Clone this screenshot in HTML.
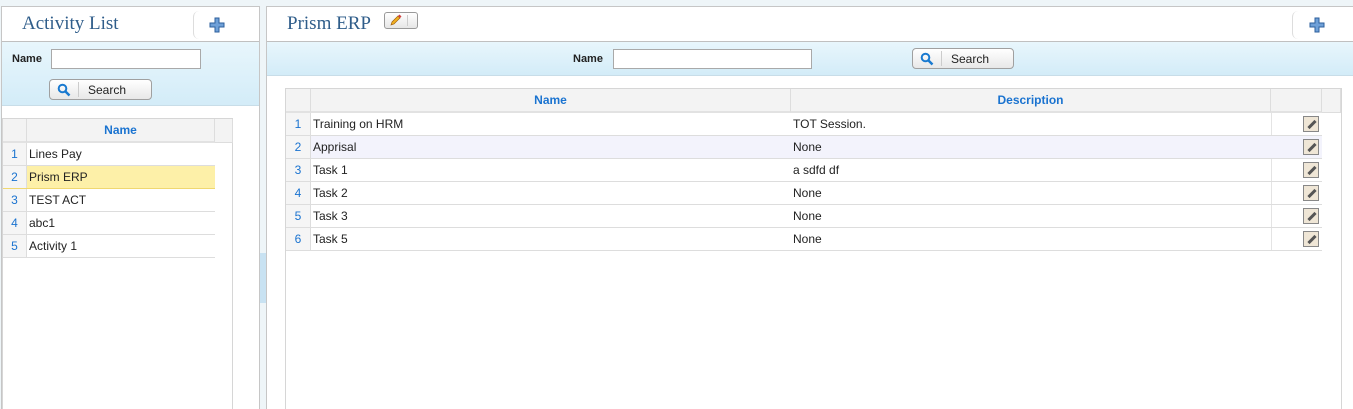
<!DOCTYPE html>
<html style="width:1353px;height:409px;overflow:hidden"><head><style>
*{box-sizing:border-box;margin:0;padding:0}
body{width:1353px;height:409px;overflow:hidden;background:#eef5f8;font-family:"Liberation Sans",Tahoma,sans-serif;font-size:12px;color:#222;position:relative}
.abs{position:absolute}
.panel{position:absolute;background:#fff;border:1px solid #c6c6c6;overflow:hidden}
.hdr{position:absolute;left:0;right:0;top:0;height:35px;background:#fff;border-bottom:1px solid #c0c0c0}
.title{position:absolute;top:6px;font-family:"Liberation Serif",serif;font-size:19px;color:#2f5d8a}
.band{position:absolute;left:0;right:0;background:linear-gradient(#e8f6fc,#d3ecf8);border-bottom:1px solid #c8dde8}
.inp{position:absolute;height:20px;border:1px solid #a9a9a9;background:#fff}
.btn{position:absolute;height:21px;border:1px solid #a0a0a0;border-radius:4px;background:linear-gradient(#fff,#e8e8e8);font-size:12px}
.btn span{position:absolute;left:38px;top:3px}
.btn i{position:absolute;left:28px;top:2px;bottom:2px;border-left:1px solid #ccc}
.lbl{position:absolute;font-weight:bold;font-size:11px}
.grid{position:absolute;border:1px solid #d6d6d6;background:#fff}
.gh{position:absolute;top:0;height:24px;background:#f3f3f3;border-right:1px solid #ddd;border-bottom:2px solid #e2e2e2;color:#1a73d0;font-weight:bold;text-align:center;line-height:23px;font-size:12px}
.row{position:absolute;height:23px;border-bottom:1px solid #ddd;line-height:22px}
.rn{position:absolute;left:0;top:0;height:22px;background:#f5f5f5;border-right:1px solid #ddd;color:#1a73d0;text-align:center}
.c{position:absolute;top:0;padding-left:2px}
.ed{position:absolute;width:16px;height:16px;border:1px solid #888;background:#efe6d6;top:3px}
.ed::after{content:"";position:absolute;left:3px;top:6px;width:10px;height:3px;background:#555;transform:rotate(-45deg)}
.plus{position:absolute;width:16px;height:16px}
</style></head><body>
<div class="panel" style="left:1px;top:6px;width:259px;height:410px">
 <div class="hdr"><div class="title" style="left:20px">Activity List</div>
  <div class="abs" style="left:191px;top:4px;height:28px;width:66px;border-left:1px solid #ddd;border-radius:6px 0 0 6px"></div>
  <svg class="plus" style="left:207px;top:10px" viewBox="0 0 16 16"><path d="M6 1h4v5h5v4h-5v5H6v-5H1V6h5z" fill="#6fa0d8" stroke="#2d5f9c"/></svg>
 </div>
 <div class="band" style="top:35px;height:64px">
  <div class="lbl" style="left:10px;top:11px">Name</div>
  <div class="inp" style="left:49px;top:7px;width:150px"></div>
  <div class="btn" style="left:47px;top:37px;width:103px"><svg class="abs" style="left:7px;top:3px" width="14" height="14" viewBox="0 0 14 14"><circle cx="5.5" cy="5.5" r="3.8" fill="none" stroke="#1a7ad0" stroke-width="2"/><path d="M8 8l4.5 4.5" stroke="#1a7ad0" stroke-width="2.5"/></svg><i></i><span>Search</span></div>
 </div>
 <div class="grid" style="left:0;top:111px;width:231px;height:310px">
  <div class="gh" style="left:0;width:24px"></div>
  <div class="gh" style="left:24px;width:188px">Name</div>
  <div class="gh" style="left:212px;width:18px;border-bottom:1px solid #ddd"></div>
  <div class="row" style="top:24px;left:0;width:212px"><div class="rn" style="width:24px">1</div><div class="c" style="left:24px">Lines Pay</div></div>
  <div class="row" style="top:47px;left:0;width:212px;background:#fdf0a8;border-bottom-color:#f0d870"><div class="rn" style="width:24px">2</div><div class="c" style="left:24px">Prism ERP</div></div>
  <div class="row" style="top:70px;left:0;width:212px"><div class="rn" style="width:24px">3</div><div class="c" style="left:24px">TEST ACT</div></div>
  <div class="row" style="top:93px;left:0;width:212px"><div class="rn" style="width:24px">4</div><div class="c" style="left:24px">abc1</div></div>
  <div class="row" style="top:116px;left:0;width:212px"><div class="rn" style="width:24px">5</div><div class="c" style="left:24px">Activity 1</div></div>
 </div>
</div>
<div class="abs" style="left:260px;top:253px;width:6px;height:50px;background:#c8e2f2"></div>
<div class="panel" style="left:266px;top:6px;width:1090px;height:410px">
 <div class="hdr"><div class="title" style="left:20px">Prism ERP</div>
  <div class="abs" style="left:117px;top:5px;width:34px;height:17px;border:1px solid #999;border-radius:3px;background:linear-gradient(#fff,#e6e6e6)"><svg class="abs" style="left:4px;top:1px" width="14" height="13" viewBox="0 0 14 13"><path d="M2 11l1-3 6-6 2 2-6 6z" fill="#f0b020" stroke="#a06010" stroke-width=".7"/><path d="M9 2l1.5-1.5 2 2L11 4z" fill="#d04040"/></svg><i class="abs" style="left:22px;top:2px;bottom:2px;border-left:1px solid #ccc"></i></div>
  <div class="abs" style="left:1025px;top:4px;height:28px;width:66px;border-left:1px solid #ddd;border-radius:6px 0 0 6px"></div>
  <svg class="plus" style="left:1042px;top:10px" viewBox="0 0 16 16"><path d="M6 1h4v5h5v4h-5v5H6v-5H1V6h5z" fill="#6fa0d8" stroke="#2d5f9c"/></svg>
 </div>
 <div class="band" style="top:35px;height:34px">
  <div class="lbl" style="left:306px;top:11px">Name</div>
  <div class="inp" style="left:346px;top:7px;width:199px"></div>
  <div class="btn" style="left:645px;top:6px;width:102px"><svg class="abs" style="left:7px;top:3px" width="14" height="14" viewBox="0 0 14 14"><circle cx="5.5" cy="5.5" r="3.8" fill="none" stroke="#1a7ad0" stroke-width="2"/><path d="M8 8l4.5 4.5" stroke="#1a7ad0" stroke-width="2.5"/></svg><i></i><span>Search</span></div>
 </div>
 <div class="grid" style="left:18px;top:81px;width:1057px;height:340px">
  <div class="gh" style="left:0;width:25px"></div>
  <div class="gh" style="left:25px;width:480px">Name</div>
  <div class="gh" style="left:505px;width:480px">Description</div>
  <div class="gh" style="left:985px;width:51px"></div>
  <div class="gh" style="left:1036px;width:19px;border-bottom:1px solid #ddd"></div>
  <div class="abs" style="left:985px;top:24px;width:1px;height:138px;background:#e4e4e4"></div>
  <div class="row" style="top:24px;left:0;width:1036px"><div class="rn" style="width:25px">1</div><div class="c" style="left:25px">Training on HRM</div><div class="c" style="left:505px">TOT Session.</div><div class="ed" style="left:1017px"></div></div>
  <div class="row" style="top:47px;left:0;width:1036px;background:#f3f3fc"><div class="rn" style="width:25px">2</div><div class="c" style="left:25px">Apprisal</div><div class="c" style="left:505px">None</div><div class="ed" style="left:1017px"></div></div>
  <div class="row" style="top:70px;left:0;width:1036px"><div class="rn" style="width:25px">3</div><div class="c" style="left:25px">Task 1</div><div class="c" style="left:505px">a sdfd df</div><div class="ed" style="left:1017px"></div></div>
  <div class="row" style="top:93px;left:0;width:1036px"><div class="rn" style="width:25px">4</div><div class="c" style="left:25px">Task 2</div><div class="c" style="left:505px">None</div><div class="ed" style="left:1017px"></div></div>
  <div class="row" style="top:116px;left:0;width:1036px"><div class="rn" style="width:25px">5</div><div class="c" style="left:25px">Task 3</div><div class="c" style="left:505px">None</div><div class="ed" style="left:1017px"></div></div>
  <div class="row" style="top:139px;left:0;width:1036px"><div class="rn" style="width:25px">6</div><div class="c" style="left:25px">Task 5</div><div class="c" style="left:505px">None</div><div class="ed" style="left:1017px"></div></div>
 </div>
</div>
</body></html>
